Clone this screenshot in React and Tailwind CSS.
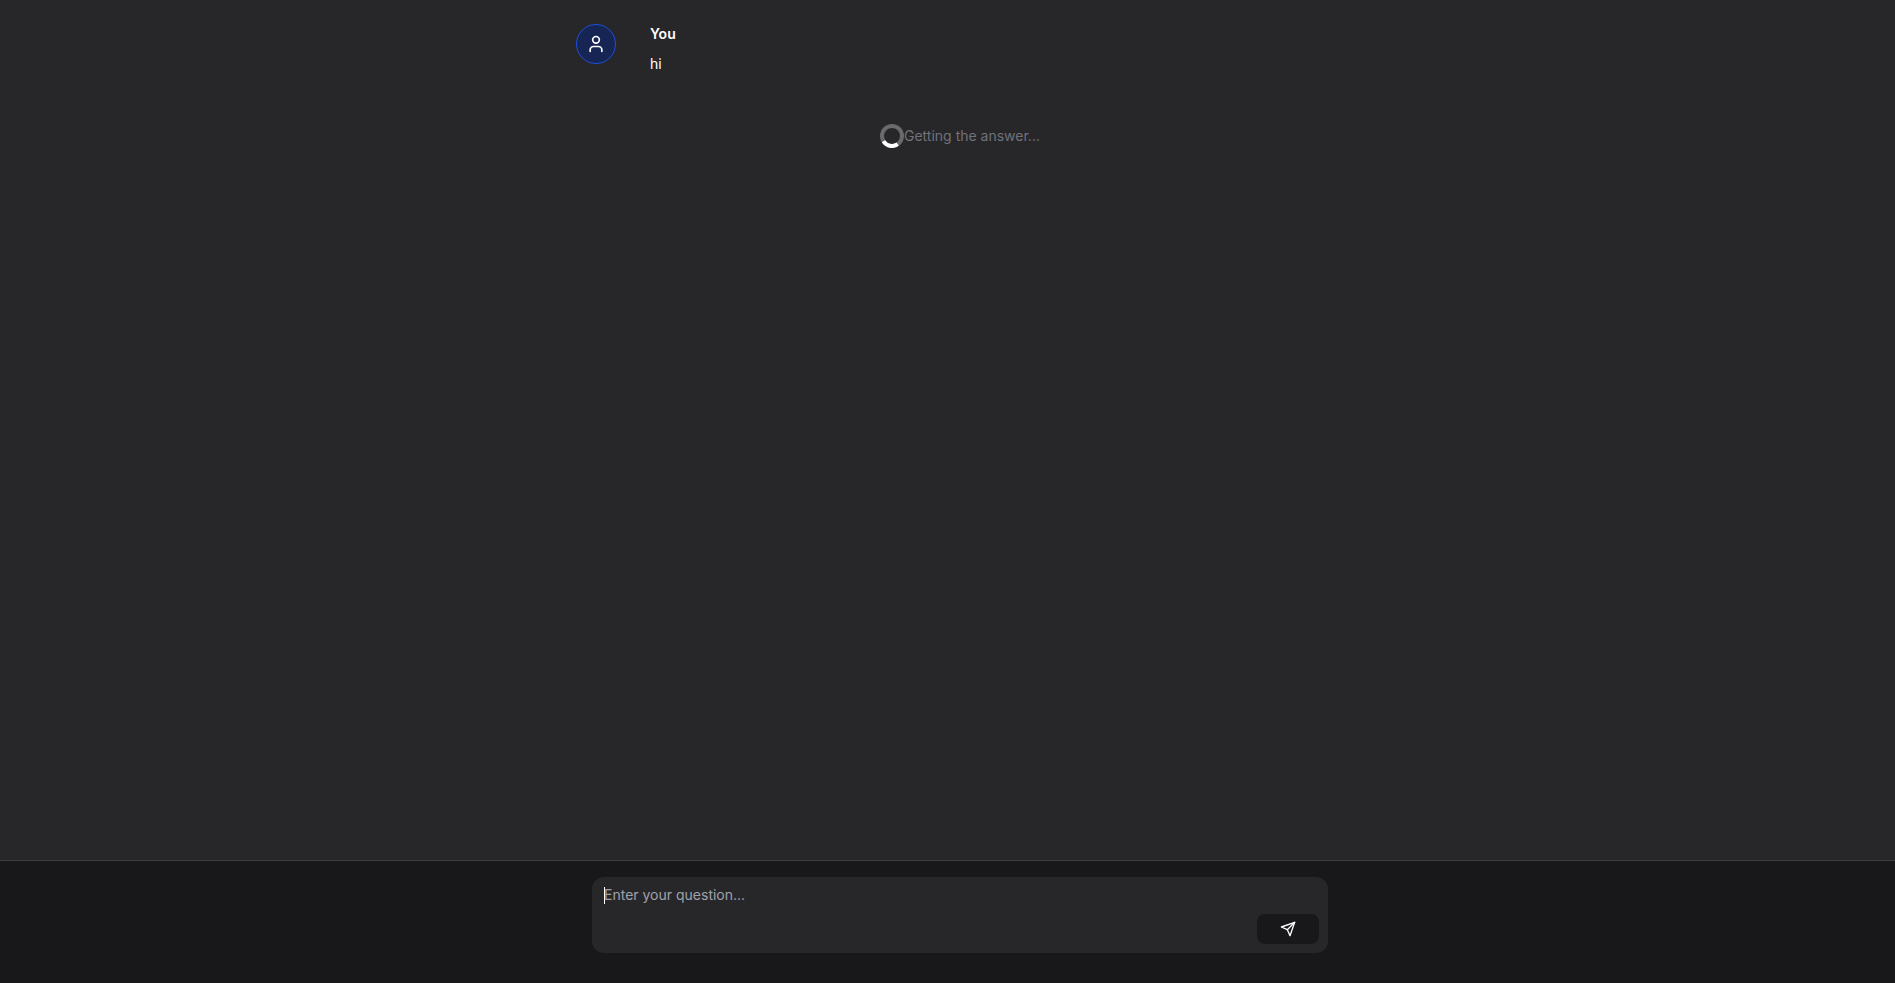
import React, { useState } from 'react';
import { User } from 'lucide-react';

const SendIcon = () => (
    <svg
        viewBox="0 0 24 24"
        className="w-4 h-4"
        fill="none"
        stroke="currentColor"
        strokeWidth="2"
        strokeLinecap="round"
        strokeLinejoin="round"
        aria-hidden="true"
    >
        <path d="m22 2-7 20-4-9-9-4Z" />
        <path d="M22 2 11 13" />
    </svg>
);

const Spinner = () => (
    <svg viewBox="0 0 24 24" className="w-6 h-6" fill="none" strokeWidth="4" aria-hidden="true">
        <circle cx="12" cy="12" r="10" stroke="#6a6a6b" />
        <path d="M17.7 20.2A10 10 0 0 1 3.5 17.3" stroke="#ffffff" />
    </svg>
);

const Message = ({ author, text }) => (
    <article className="flex items-start pt-6">
        <div className="w-10 h-10 shrink-0 rounded-full border border-[#1d4ed8] bg-[#172554] flex items-center justify-center">
            <User size={20} aria-hidden="true" />
        </div>
        <div className="ml-[34px]">
            <h2 className="font-semibold">{author}</h2>
            <p className="mt-2.5">{text}</p>
        </div>
    </article>
);

const QuestionForm = () => {
    const [question, setQuestion] = useState('');

    return (
        <form
            onSubmit={(e) => e.preventDefault()}
            className="relative mx-4 flex items-end rounded-xl bg-[#27272a] pr-[9px] pb-[9px]"
        >
            <textarea
                autoFocus
                aria-label="Question"
                placeholder="Enter your question..."
                value={question}
                onChange={(e) => setQuestion(e.target.value)}
                className="block h-[67px] flex-1 resize-none bg-transparent px-3 pt-2 text-white caret-transparent outline-none placeholder:text-[#a1a1aa]"
            />
            {/* Cursor visible mientras no hay texto */}
            {!question && (
                <span className="pointer-events-none absolute left-3 top-2.5 h-[17px] w-px bg-white" aria-hidden="true" />
            )}
            <button
                type="submit"
                aria-label="Send"
                className="flex h-[30px] w-[62px] items-center justify-center rounded-lg bg-[#18181b]"
            >
                <SendIcon />
            </button>
        </form>
    );
};

const App = () => {
    return (
        <div className="min-h-screen flex flex-col bg-[#27272a] font-['Inter',sans-serif] text-sm text-white">
            <main className="flex-1 pl-[25px]">
                <div className="mx-auto max-w-3xl">
                    <Message author="You" text="hi" />
                    <div role="status" className="mt-[50px] flex items-center justify-center text-[#71717a]">
                        <Spinner />
                        <span>Getting the answer...</span>
                    </div>
                </div>
            </main>
            <footer className="border-t border-[#3f3f46] bg-[#18181b] pl-[25px] pt-4 pb-[30px]">
                <div className="mx-auto max-w-3xl">
                    <QuestionForm />
                </div>
            </footer>
        </div>
    );
};

export default App;
